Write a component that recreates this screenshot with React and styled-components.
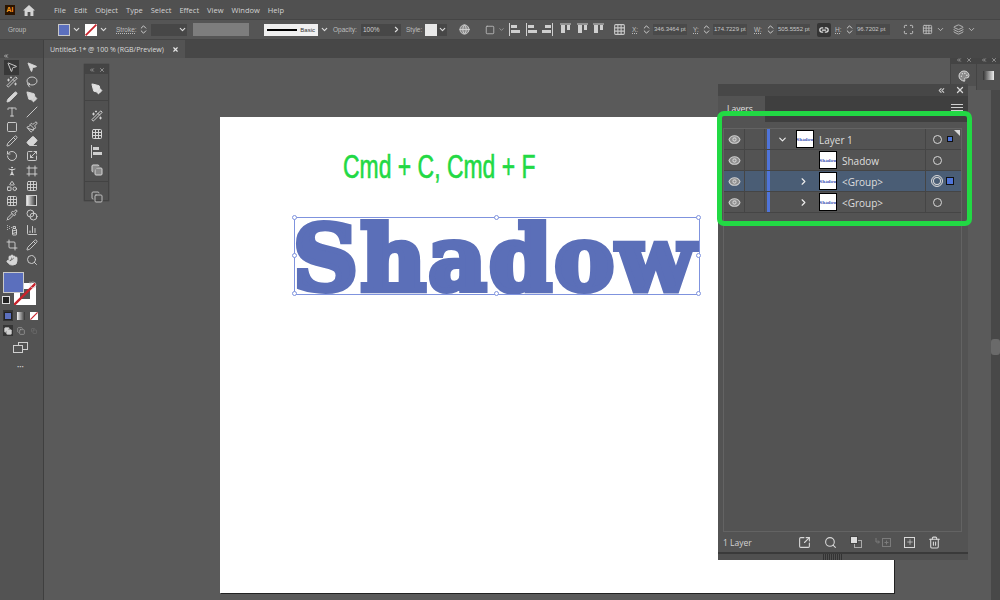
import React from 'react'
import styled, { createGlobalStyle } from 'styled-components'
import {
  ChevronDown, ChevronRight, ChevronsUpDown, ChevronsLeft, X, Eye, Search, Plus, Trash2, SquareArrowOutUpRight,
  MousePointer2, Wand2, Lasso, Pen, PenTool, Type, Slash, Square, Paintbrush, Pencil, Eraser, RotateCcw, Scaling, Hand,
  Blend, Pipette, Crop, BarChart3, Grid3x3, Layers, Link2, Maximize, Globe, Copy, SprayCan, Palette, Frame, PersonStanding, Shapes,
} from 'lucide-react'

const GlobalStyle = createGlobalStyle`
  html, body {
    margin: 0;
    padding: 0;
    background: #535353;
  }
  * { box-sizing: border-box; }
`

const menus = ['File', 'Edit', 'Object', 'Type', 'Select', 'Effect', 'View', 'Window', 'Help']

function GradTool() {
  return <GradSquare />
}

const tools = [
  [MousePointer2, MousePointer2], [Wand2, Lasso], [Pen, PenTool], [Type, Slash], [Square, Paintbrush],
  [Pencil, Eraser], [RotateCcw, Scaling], [PersonStanding, Frame], [Shapes, Grid3x3], [Grid3x3, GradTool],
  [Pipette, Blend], [SprayCan, BarChart3], [Crop, Pencil], [Hand, Search],
]

const filledTools = ['0-1', '2-0', '2-1', '5-1', '7-0', '13-0']

const layers = [
  { name: 'Layer 1', arrow: 'down', indent: 0, square: 'small' },
  { name: 'Shadow', indent: 1 },
  { name: '<Group>', arrow: 'right', indent: 1, selected: true, square: 'big' },
  { name: '<Group>', arrow: 'right', indent: 1 },
]

function HomeIcon() {
  return (
    <svg width="12" height="12" viewBox="0 0 12 12" fill="#d4d4d4">
      <path d="M6 1L0 6.5h1.6V12h3V8h2.8v4h3V6.5H12z" />
    </svg>
  )
}

function AlignIcon({ flip }) {
  return (
    <svg width="11" height="13" viewBox="0 0 11 13" style={{ transform: flip ? 'scaleX(-1)' : 'none' }}>
      <path d="M.5 0v13" stroke="#cfcfcf" />
      <rect x="2" y="2" width="6" height="3" fill="#cfcfcf" />
      <rect x="2" y="7" width="9" height="3" fill="#cfcfcf" />
    </svg>
  )
}

function ColIcon() {
  return (
    <svg width="11" height="13" viewBox="0 0 11 13">
      <path d="M0 1h11" stroke="#cfcfcf" />
      <rect x="1" y="2" width="4" height="8" fill="#cfcfcf" />
      <rect x="7" y="2" width="3" height="5" fill="#cfcfcf" />
    </svg>
  )
}

function MergeIcon() {
  return (
    <svg width="16" height="11" viewBox="0 0 16 11" fill="none" stroke="#7c7c7c">
      <path d="M1 1v4h3M3 3.5L4.5 5 3 6.5" />
      <rect x="7.5" y="1.5" width="8" height="8" />
      <path d="M11.5 3.5v4M9.5 5.5h4" />
    </svg>
  )
}

function NoneSwatch({ size }) {
  return (
    <svg width={size} height={size} viewBox="0 0 20 20">
      <rect width="20" height="20" fill="#fff" />
      <path d="M1 19L19 1" stroke="#c8232c" strokeWidth="3" />
    </svg>
  )
}

function Stepper() {
  return <ChevronsUpDown size={11} color="#d8d8d8" strokeWidth={2} />
}

export default function App() {
  return (
    <>
      <GlobalStyle />
      <Page>
        <MenuBar>
          <AiLogo>Ai</AiLogo>
          <HomeWrap><HomeIcon /></HomeWrap>
          {menus.map((m) => <MenuItem key={m}>{m}</MenuItem>)}
        </MenuBar>

        <OptionsBar>
          <OptLabel $w={50}>Group</OptLabel>
          <FillSwatch />
          <DropMini><ChevronDown size={9} strokeWidth={3} /></DropMini>
          <IconCell $ml={2}><NoneSwatch size={12} /></IconCell>
          <DropMini><ChevronDown size={9} strokeWidth={3} /></DropMini>
          <OptLabel $w={22} $ml={6} $underline>Stroke:</OptLabel>
          <Stepper />
          <Field $w={26} $ml={2} />
          <DropMini $dark><ChevronDown size={9} strokeWidth={3} /></DropMini>
          <DisabledBox />
          <BasicBox>
            <BasicLine />
            <span>Basic</span>
          </BasicBox>
          <DropMini><ChevronDown size={9} strokeWidth={3} /></DropMini>
          <OptLabel $w={26} $ml={2}>Opacity:</OptLabel>
          <Field $w={30} $ml={2}>100%</Field>
          <DropMini $dark><ChevronRight size={9} strokeWidth={3} /></DropMini>
          <OptLabel $w={19} $ml={3}>Style:</OptLabel>
          <StyleSwatch />
          <DropMini $dark><ChevronDown size={9} strokeWidth={3} /></DropMini>
          <IconCell $ml={10}><Globe size={11} color="#cfcfcf" fill="#8a8a8a" /></IconCell>
          <IconCell $ml={15}><Square size={10} color="#bdbdbd" /><ChevronDown size={7} color="#bdbdbd" /></IconCell>
          <IconCell $ml={4}><AlignIcon /></IconCell>
          <IconCell $ml={6}><AlignIcon /></IconCell>
          <IconCell $ml={5}><AlignIcon flip /></IconCell>
          <IconCell $ml={7}><ColIcon /></IconCell>
          <IconCell $ml={6}><ColIcon /></IconCell>
          <IconCell $ml={5}><ColIcon /></IconCell>
          <IconCell $ml={9}><Grid3x3 size={13} color="#c8c8c8" /></IconCell>
          <OptLabel $w={9} $ml={6} $underline>X:</OptLabel>
          <Stepper />
          <CoordField $w={34}>346.3464 pt</CoordField>
          <OptLabel $w={8} $ml={6} $underline>Y:</OptLabel>
          <Stepper />
          <CoordField $w={34}>174.7229 pt</CoordField>
          <OptLabel $w={11} $ml={7} $underline>W:</OptLabel>
          <Stepper />
          <CoordField $w={33}>505.5552 pt</CoordField>
          <LinkBtn><Link2 size={10} color="#e0e0e0" strokeWidth={3} /></LinkBtn>
          <OptLabel $w={9} $ml={4} $underline>H:</OptLabel>
          <Stepper />
          <CoordField $w={34}>96.7202 pt</CoordField>
          <IconCell $ml={13}><Maximize size={11} color="#c8c8c8" /></IconCell>
          <IconCell $ml={8}><Grid3x3 size={11} color="#bcbcbc" /><ChevronDown size={9} color="#d0d0d0" /></IconCell>
          <IconCell $ml={8}><Layers size={11} color="#bcbcbc" /><ChevronDown size={9} color="#d0d0d0" /></IconCell>
        </OptionsBar>

        <TabBar>
          <TabRail><ChevronsLeft size={6} color="#cfcfcf" strokeWidth={3} /></TabRail>
          <DocTab>
            Untitled-1* @ 100 % (RGB/Preview)
            <X size={7} strokeWidth={4} color="#e6e6e6" />
          </DocTab>
        </TabBar>

        <Workspace>
          <ToolBar>
            <ToolGrid>
              {tools.map((row, i) =>
                row.map((Icon, j) => (
                  <ToolBtn key={`${i}-${j}`} $active={i === 0 && j === 0}>
                    <Icon
                      size={12}
                      color="#d6d6d6"
                      fill={filledTools.includes(`${i}-${j}`) ? '#d6d6d6' : 'none'}
                      strokeWidth={1.8}
                    />
                  </ToolBtn>
                ))
              )}
            </ToolGrid>
            <ColorWell>
              <StrokeChip><StrokeHole /><StrokeSlash viewBox="0 0 22 22"><path d="M0 22L22 0" stroke="#c8232c" strokeWidth="2.4" /></StrokeSlash></StrokeChip>
              <FillChip />
              <SwapMark><RotateCcw size={8} color="#cfcfcf" /></SwapMark>
              <DefaultMark />
            </ColorWell>
            <ModeRow>
              <ModeCell $active><MiniFill /></ModeCell>
              <ModeCell><MiniGrad /></ModeCell>
              <ModeCell><NoneSwatch size={8} /></ModeCell>
            </ModeRow>
            <ModeRow>
              <ModeCell $active><Copy size={8} color="#d0d0d0" fill="#d0d0d0" /></ModeCell>
              <ModeCell><Copy size={8} color="#a8a8a8" /></ModeCell>
              <ModeCell><Copy size={6} color="#767676" /></ModeCell>
            </ModeRow>
            <ScreenBtn>
              <svg width="15" height="11" viewBox="0 0 15 11" fill="none" stroke="#cfcfcf">
                <rect x="5.5" y=".5" width="9" height="7" />
                <rect x=".5" y="3.5" width="9" height="7" fill="#535353" />
              </svg>
            </ScreenBtn>
            <MoreDots>•••</MoreDots>
          </ToolBar>

          <Canvas>
            <Artboard />
            <Headline>Cmd + C, Cmd + F</Headline>
            <ShadowText>Shadow</ShadowText>
            <SelectBox>
              <Handle $x="0%" $y="0%" /><Handle $x="50%" $y="0%" /><Handle $x="100%" $y="0%" />
              <Handle $x="0%" $y="50%" /><Handle $x="100%" $y="50%" />
              <Handle $x="0%" $y="100%" /><Handle $x="50%" $y="100%" /><Handle $x="100%" $y="100%" />
            </SelectBox>

            <MiniPanel>
              <MiniHead><ChevronsLeft size={6} /><X size={6} /></MiniHead>
              <MiniGroup><PenTool size={12} color="#e0e0e0" fill="#e0e0e0" /></MiniGroup>
              <MiniGroup>
                <Wand2 size={12} color="#d6d6d6" />
                <Grid3x3 size={12} color="#d6d6d6" />
                <AlignIcon />
                <Copy size={12} color="#d6d6d6" fill="#8a8a8a" />
              </MiniGroup>
              <MiniGroup $last><Copy size={12} color="#bdbdbd" /></MiniGroup>
            </MiniPanel>

            <ScrollEdge><ScrollKnob /></ScrollEdge>

            <DockA>
              <MiniHead><ChevronsLeft size={6} /><X size={6} /></MiniHead>
              <DockIcon><Palette size={12} color="#d8d8d8" fill="#8a8a8a" /></DockIcon>
            </DockA>
            <DockB>
              <MiniHead><ChevronsLeft size={6} /><X size={6} /></MiniHead>
              <DockIcon><GradChip /></DockIcon>
            </DockB>

            <LayersPanel>
              <PanelTop>
                <ChevronsLeft size={9} color="#c8c8c8" strokeWidth={3} />
                <X size={10} color="#d8d8d8" strokeWidth={3} />
              </PanelTop>
              <PanelTabs>
                <ActiveTab>Layers</ActiveTab>
                <PanelMenu><i /><i /><i /></PanelMenu>
              </PanelTabs>
              <LayerList>
                <Corner />
                {layers.map((l, i) => (
                  <LayerRow key={i} $selected={l.selected}>
                    <EyeCell><Eye size={13} color="#d0d0d0" fill="#8c8c8c" strokeWidth={2} /></EyeCell>
                    <LockCell />
                    <ColorBar />
                    <TreeCell $indent={l.indent}>
                      <ArrowBox>
                        {l.arrow === 'down' && <ChevronDown size={11} color="#eee" strokeWidth={2.5} />}
                        {l.arrow === 'right' && <ChevronRight size={11} color="#eee" strokeWidth={2.5} />}
                      </ArrowBox>
                      <Thumb $indent={l.indent}><ThumbText>Shadow</ThumbText></Thumb>
                      <LayerName>{l.name}</LayerName>
                    </TreeCell>
                    <TargetCell>
                      <TargetRing $double={l.selected} />
                      {l.square && <SelectSquare $big={l.square === 'big'} />}
                    </TargetCell>
                  </LayerRow>
                ))}
              </LayerList>
              <PanelFooter>
                <LayerCount>1 Layer</LayerCount>
                <FooterIcons>
                  <SquareArrowOutUpRight size={13} color="#d8d8d8" />
                  <Search size={13} color="#d8d8d8" />
                  <MaskIcon><MaskBack /><MaskFront /></MaskIcon>
                  <MergeIcon />
                  <NewLayerBox><Plus size={8} color="#d8d8d8" /></NewLayerBox>
                  <Trash2 size={13} color="#d8d8d8" />
                </FooterIcons>
              </PanelFooter>
              <GripBar><Grip /></GripBar>
            </LayersPanel>
            <GreenFrame />
          </Canvas>
        </Workspace>
      </Page>
    </>
  )
}

const Page = styled.div`
  width: 1000px;
  height: 600px;
  overflow: hidden;
  display: flex;
  flex-direction: column;
  background: #535353;
  font-family: "Open Sans", "Liberation Sans", sans-serif;
  color: #d6d6d6;

  svg {
    flex: none;
  }
`

const MenuBar = styled.div`
  height: 19px;
  display: flex;
  align-items: center;
  padding-left: 5px;
  background: #505050;
`

const AiLogo = styled.div`
  width: 10px;
  height: 10px;
  background: #2b1400;
  color: #f7941e;
  font-size: 7px;
  font-weight: 700;
  line-height: 10px;
  text-align: center;
`

const HomeWrap = styled.div`
  width: 14px;
  margin: 0 17px 0 8px;
  display: flex;
`

const MenuItem = styled.span`
  font-size: 7.5px;
  margin-right: 8px;
  color: #d2d2d2;
`

const OptionsBar = styled.div`
  height: 21px;
  display: flex;
  align-items: center;
  padding-left: 8px;
  background: #555;
  border-top: 1px solid #454545;
  border-bottom: 1px solid #454545;
  white-space: nowrap;
  font-family: "Liberation Sans", sans-serif;
`

const OptLabel = styled.span`
  width: ${(p) => p.$w}px;
  margin-left: ${(p) => p.$ml || 0}px;
  font-size: 6.5px;
  color: #bdbdbd;
  text-decoration: ${(p) => (p.$underline ? 'underline dotted' : 'none')};
  flex: none;
`

const FillSwatch = styled.div`
  width: 12px;
  height: 12px;
  background: #5b6fbd;
  border: 1px solid #c8c8c8;
  flex: none;
`

const DropMini = styled.div`
  width: 10px;
  height: 12px;
  margin: 0 2px 0 ${(p) => (p.$dark ? 0 : 1)}px;
  display: flex;
  align-items: center;
  justify-content: center;
  background: ${(p) => (p.$dark ? '#474747' : 'transparent')};
  color: #dcdcdc;
  flex: none;
`

const Field = styled.div`
  width: ${(p) => p.$w}px;
  height: 12px;
  margin-left: ${(p) => p.$ml || 0}px;
  background: #474747;
  font-size: 6.5px;
  line-height: 12px;
  padding-left: 2px;
  color: #cfcfcf;
  flex: none;
`

const DisabledBox = styled.div`
  width: 56px;
  height: 13px;
  margin-left: 4px;
  background: #7d7d7d;
  flex: none;
`

const BasicBox = styled.div`
  width: 54px;
  height: 12px;
  margin-left: 15px;
  padding: 0 3px;
  display: flex;
  align-items: center;
  justify-content: space-between;
  background: #f0f0f0;
  color: #333;
  font-size: 6px;
  flex: none;
`

const BasicLine = styled.div`
  width: 30px;
  height: 2px;
  background: #000;
`

const StyleSwatch = styled.div`
  width: 12px;
  height: 12px;
  background: #e9e9e9;
  flex: none;
`

const IconCell = styled.div`
  margin-left: ${(p) => p.$ml || 0}px;
  display: flex;
  align-items: center;
  gap: 3px;
  flex: none;
`

const CoordField = styled.div`
  width: ${(p) => p.$w}px;
  height: 11px;
  margin-left: 1px;
  padding-left: 1px;
  background: #4a4a4a;
  font-size: 6px;
  line-height: 11px;
  color: #c8c8c8;
  overflow: hidden;
  flex: none;
`

const LinkBtn = styled.div`
  width: 14px;
  height: 14px;
  margin-left: 7px;
  background: #353535;
  border-radius: 2px;
  display: flex;
  align-items: center;
  justify-content: center;
  flex: none;
`

const TabBar = styled.div`
  height: 18px;
  display: flex;
  background: #474747;
`

const TabRail = styled.div`
  width: 44px;
  padding: 2px 0 0 3px;
  background: #4b4b4b;
  border-right: 1px solid #404040;
`

const DocTab = styled.div`
  width: 141px;
  display: flex;
  align-items: center;
  justify-content: space-between;
  padding: 0 6px;
  background: #535353;
  font-size: 7px;
  color: #dcdcdc;
`

const Workspace = styled.div`
  flex: 1;
  min-height: 0;
  display: flex;
`

const ToolBar = styled.div`
  width: 44px;
  flex: none;
  padding-top: 2px;
  background: #535353;
  border-right: 1px solid #3f3f3f;
  display: flex;
  flex-direction: column;
`

const ToolGrid = styled.div`
  display: grid;
  grid-template-columns: 15px 15px;
  grid-auto-rows: 14.8px;
  column-gap: 5px;
  padding-left: 4px;
`

const ToolBtn = styled.div`
  display: flex;
  align-items: center;
  justify-content: center;
  background: ${(p) => (p.$active ? '#383838' : 'transparent')};
`

const GradSquare = styled.div`
  width: 11px;
  height: 11px;
  border: 1px solid #cfcfcf;
  background: linear-gradient(90deg, #eee, #333);
`

const ColorWell = styled.div`
  position: relative;
  height: 34px;
  margin-top: 5px;
`

const FillChip = styled.div`
  position: absolute;
  left: 3px;
  top: 0;
  width: 21px;
  height: 21px;
  background: #5b6fbd;
  border: 1px solid #c9c9c9;
`

const StrokeChip = styled.div`
  position: absolute;
  left: 14px;
  top: 11px;
  width: 22px;
  height: 22px;
  background: #fff;
`

const StrokeHole = styled.div`
  position: absolute;
  inset: 6px;
  background: #535353;
`

const StrokeSlash = styled.svg`
  position: absolute;
  inset: 0;
`

const SwapMark = styled.div`
  position: absolute;
  left: 29px;
  top: 0;
`

const DefaultMark = styled.div`
  position: absolute;
  left: 2px;
  top: 24px;
  width: 8px;
  height: 8px;
  background: #222;
  border: 1px solid #ddd;
`

const ModeRow = styled.div`
  display: flex;
  gap: 3px;
  padding-left: 3px;
  margin-top: 4px;
  height: 11px;
`

const ModeCell = styled.div`
  width: 10px;
  height: 11px;
  display: flex;
  align-items: center;
  justify-content: center;
  background: ${(p) => (p.$active ? '#353535' : 'transparent')};
`

const MiniFill = styled.div`
  width: 8px;
  height: 8px;
  background: #5b6fbd;
  border: 1px solid #222;
`

const MiniGrad = styled.div`
  width: 8px;
  height: 8px;
  background: linear-gradient(90deg, #eee, #333);
`

const ScreenBtn = styled.div`
  display: flex;
  justify-content: center;
  margin-top: 6px;
  padding-right: 2px;
`

const MoreDots = styled.div`
  text-align: center;
  font-size: 6px;
  margin-top: 10px;
  padding-right: 2px;
  color: #d0d0d0;
`

const Canvas = styled.div`
  position: relative;
  flex: 1;
  min-width: 0;
  background: #5a5a5a;
  overflow: hidden;
`

const Artboard = styled.div`
  position: absolute;
  left: 176px;
  top: 59px;
  width: 674px;
  height: 476px;
  background: #fff;
  box-shadow: 1px 1px 0 #222;
`

const Headline = styled.div`
  position: absolute;
  left: 299px;
  top: 89px;
  font-family: "Liberation Sans", sans-serif;
  font-size: 33.5px;
  line-height: 40px;
  color: #22d944;
  white-space: nowrap;
  transform: scaleX(0.685);
  transform-origin: left center;
  -webkit-text-stroke: 0.6px #22d944;
`

const ShadowText = styled.div`
  position: absolute;
  left: 249px;
  top: 145px;
  font-family: "DejaVu Serif", "Liberation Serif", serif;
  font-weight: 700;
  font-size: 90px;
  line-height: 110px;
  letter-spacing: 2.4px;
  color: #5b6fb8;
  white-space: nowrap;
  -webkit-text-stroke: 6px #5b6fb8;
`

const SelectBox = styled.div`
  position: absolute;
  left: 250px;
  top: 159px;
  width: 406px;
  height: 78px;
  border: 1px solid #7f93de;
`

const Handle = styled.span`
  position: absolute;
  left: ${(p) => p.$x};
  top: ${(p) => p.$y};
  width: 5px;
  height: 5px;
  margin: -3px;
  border-radius: 50%;
  background: #fff;
  border: 1px solid #7f93de;
`

const MiniPanel = styled.div`
  position: absolute;
  left: 40px;
  top: 6px;
  width: 25px;
  height: 137px;
  background: #505050;
  border: 1px solid #434343;
  display: flex;
  flex-direction: column;
  box-shadow: 0 0 1px #333;
`

const MiniHead = styled.div`
  height: 9px;
  flex: none;
  display: flex;
  align-items: center;
  justify-content: center;
  gap: 4px;
  background: #444;
  color: #d8d8d8;
`

const MiniGroup = styled.div`
  display: flex;
  flex-direction: column;
  align-items: center;
  gap: 5.5px;
  padding: 9px 0 5px;
  border-bottom: ${(p) => (p.$last ? 'none' : '1px solid #434343')};
`

const DockA = styled.div`
  position: absolute;
  left: 906px;
  top: -3px;
  width: 26px;
  height: 31px;
  background: #505050;
  border-left: 1px solid #444;
`

const DockB = styled.div`
  position: absolute;
  left: 932px;
  top: -3px;
  width: 24px;
  height: 35px;
  background: #505050;
  border-left: 1px solid #444;
`

const DockIcon = styled.div`
  height: 23px;
  display: flex;
  align-items: center;
  justify-content: center;
`

const GradChip = styled.div`
  width: 11px;
  height: 9px;
  background: linear-gradient(90deg, #333, #eee);
`

const LayersPanel = styled.div`
  position: absolute;
  left: 674px;
  top: 26px;
  width: 250px;
  height: 476px;
  background: #535353;
  display: flex;
  flex-direction: column;
`

const PanelTop = styled.div`
  height: 12px;
  display: flex;
  align-items: center;
  justify-content: flex-end;
  gap: 9px;
  padding-right: 3px;
  background: #474747;
`

const PanelTabs = styled.div`
  height: 26px;
  display: flex;
  justify-content: space-between;
  background: #3f3f3f;
`

const ActiveTab = styled.div`
  width: 47px;
  padding: 7px 0 0 9px;
  background: #535353;
  font-size: 8.5px;
  color: #e2e2e2;
`

const PanelMenu = styled.div`
  width: 12px;
  margin: 8px 5px 0 0;
  display: flex;
  flex-direction: column;
  gap: 2px;

  i {
    display: block;
    height: 1px;
    background: #cfcfcf;
  }
`

const LayerList = styled.div`
  position: relative;
  flex: 1;
  margin: 6px 6px 0 5px;
  border: 1px solid #636363;
  display: flex;
  flex-direction: column;
`

const Corner = styled.div`
  position: absolute;
  right: 1px;
  top: 1px;
  width: 0;
  height: 0;
  border-top: 6px solid #d8d8d8;
  border-left: 6px solid transparent;
`

const LayerRow = styled.div`
  height: 21px;
  flex: none;
  display: flex;
  align-items: stretch;
  background: ${(p) => (p.$selected ? '#4a5d75' : 'transparent')};
  border-bottom: 1px solid #454545;
`

const EyeCell = styled.div`
  width: 21px;
  display: flex;
  align-items: center;
  justify-content: center;
  border-right: 1px solid #454545;
`

const LockCell = styled.div`
  width: 20px;
  border-right: 1px solid #454545;
`

const ColorBar = styled.div`
  width: 3px;
  margin: 0 0 0 2px;
  background: #4f74d9;
`

const TreeCell = styled.div`
  flex: 1;
  display: flex;
  align-items: center;
  padding-left: ${(p) => (p.$indent ? 27 : 6)}px;
  border-right: 1px solid #454545;
`

const ArrowBox = styled.div`
  width: 12px;
  display: flex;
  justify-content: center;
`

const Thumb = styled.div`
  width: 18px;
  height: 18px;
  margin-left: ${(p) => (p.$indent ? 10 : 8)}px;
  background: #fff;
  border: 1px solid #000;
  display: flex;
  align-items: center;
  justify-content: center;
  overflow: hidden;
`

const ThumbText = styled.span`
  font-family: "DejaVu Serif", serif;
  font-weight: 700;
  font-size: 4px;
  color: #3f55b5;
`

const LayerName = styled.span`
  margin: 2px 0 0 5px;
  font-size: 10px;
  color: #dedede;
`

const TargetCell = styled.div`
  width: 35px;
  position: relative;
  display: flex;
  align-items: center;
  padding-left: 6.5px;
`

const TargetRing = styled.span`
  width: ${(p) => (p.$double ? 12 : 9)}px;
  height: ${(p) => (p.$double ? 12 : 9)}px;
  margin-left: ${(p) => (p.$double ? -1.5 : 0)}px;
  border-radius: 50%;
  border: 1px solid #d8d8d8;
  box-shadow: ${(p) => (p.$double ? 'inset 0 0 0 1px #4a5d75, inset 0 0 0 2px #d8d8d8' : 'none')};
`

const SelectSquare = styled.span`
  width: ${(p) => (p.$big ? 8 : 6)}px;
  height: ${(p) => (p.$big ? 8 : 6)}px;
  margin-left: ${(p) => (p.$big ? 3 : 5)}px;
  background: #4f74d9;
  border: 1px solid #111;
`

const PanelFooter = styled.div`
  height: 20px;
  flex: none;
  display: flex;
  align-items: center;
  padding-left: 5px;
`

const LayerCount = styled.span`
  width: 75px;
  font-size: 8.5px;
  color: #d2d2d2;
`

const FooterIcons = styled.div`
  display: flex;
  align-items: center;
  gap: 13px;
`

const MaskIcon = styled.div`
  position: relative;
  width: 12px;
  height: 12px;
`

const MaskBack = styled.span`
  position: absolute;
  right: 0;
  bottom: 0;
  width: 8px;
  height: 8px;
  border: 1px solid #aaa;
`

const MaskFront = styled.span`
  position: absolute;
  left: 0;
  top: 0;
  width: 8px;
  height: 8px;
  background: #ddd;
  border: 1px solid #444;
`

const NewLayerBox = styled.div`
  width: 11px;
  height: 11px;
  border: 1px solid #d8d8d8;
  display: flex;
  align-items: center;
  justify-content: center;
`

const GripBar = styled.div`
  height: 8px;
  flex: none;
  display: flex;
  justify-content: center;
  border-top: 2px solid #3a3a3a;
  background: #505050;
`

const Grip = styled.div`
  width: 20px;
  height: 6px;
  margin-right: 20px;
  background: repeating-linear-gradient(90deg, #333 0 1px, transparent 1px 2px);
`

const GreenFrame = styled.div`
  position: absolute;
  left: 673px;
  top: 53px;
  width: 255px;
  height: 115px;
  border: 5px solid #22d944;
  border-radius: 7px;
`

const ScrollEdge = styled.div`
  position: absolute;
  right: 0;
  top: 0;
  bottom: 0;
  width: 9px;
  background: #484848;
`

const ScrollKnob = styled.div`
  position: absolute;
  left: 0;
  top: 281px;
  width: 9px;
  height: 16px;
  border-radius: 3px;
  background: #6a6a6a;
`
